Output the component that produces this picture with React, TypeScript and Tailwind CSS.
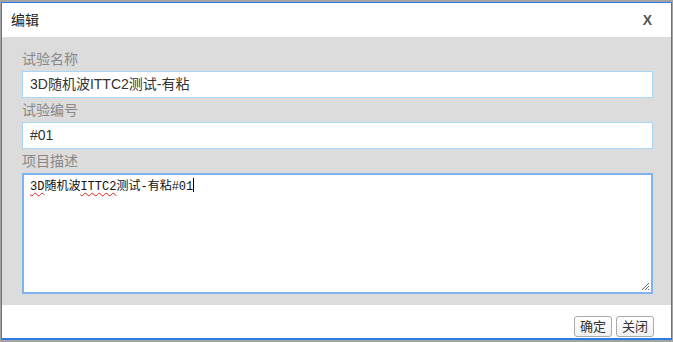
const sans = 'font-["Liberation_Sans","Noto_Sans_CJK_SC",sans-serif]';

const Field = ({ label, value }: { label: string; value: string }) => (
  <>
    <div className="h-[24px] leading-[24px] text-[14px] text-[#888]">{label}</div>
    <div className="h-[27px] w-[631px] border border-[#a9d6f5] bg-white px-[7px] leading-[25px] text-[14px] text-[#333]">
      {value}
    </div>
  </>
);

const Squiggle = ({ children }: { children: string }) => (
  <span className="underline decoration-wavy decoration-[#e02020] decoration-1 underline-offset-2">{children}</span>
);

export default function App() {
  return (
    <div className={`w-[673px] h-[342px] bg-[#a4a4a4] pt-[2px] pl-[1px] ${sans}`}>
      <div className="w-[671px] h-[338px] border border-[#2f7de0] border-b-2 bg-white flex flex-col">
        {/* header */}
        <div className="h-[34px] flex items-center justify-between pl-[9px] pr-[19px]">
          <span className="text-[14px] text-[#222]">编辑</span>
          <span className="text-[14px] font-semibold text-[#555]">X</span>
        </div>

        {/* body */}
        <div className="bg-[#dcdcdc] pt-[10px] pb-[11px] pl-[20px] pr-[18px]">
          <Field label="试验名称" value="3D随机波ITTC2测试-有粘" />
          <Field label="试验编号" value="#01" />
          <div className="h-[24px] leading-[24px] text-[14px] text-[#888]">项目描述</div>
          <div className="relative h-[121px] w-[631px] border-2 border-[#80b2ee] bg-white px-[6px] pt-[3px] font-['Liberation_Mono','Noto_Sans_CJK_SC',monospace] text-[12px] leading-[18px] text-[#111]">
            <Squiggle>3D</Squiggle>随机波<Squiggle>ITTC2</Squiggle>测试-有粘#01
            <span className="inline-block w-px h-[14px] bg-black align-[-2px]" />
            {/* resize grip */}
            <svg className="absolute right-[1px] bottom-[1px]" width="10" height="10" viewBox="0 0 10 10">
              <path d="M9 2 L2 9 M9 5 L5 9 M9 8 L8 9" stroke="#666" strokeWidth="1" />
            </svg>
          </div>
        </div>

        {/* footer */}
        <div className="flex-1 flex justify-end items-start gap-[4px] pt-[11px] pr-[17px]">
          <button className="h-[21px] px-[5px] rounded-[3px] border border-[#aaa] bg-gradient-to-b from-white to-[#f0f0f0] text-[13px] leading-[19px] text-[#333]">确定</button>
          <button className="h-[21px] px-[5px] rounded-[3px] border border-[#aaa] bg-gradient-to-b from-white to-[#f0f0f0] text-[13px] leading-[19px] text-[#333]">关闭</button>
        </div>
      </div>
    </div>
  );
}
